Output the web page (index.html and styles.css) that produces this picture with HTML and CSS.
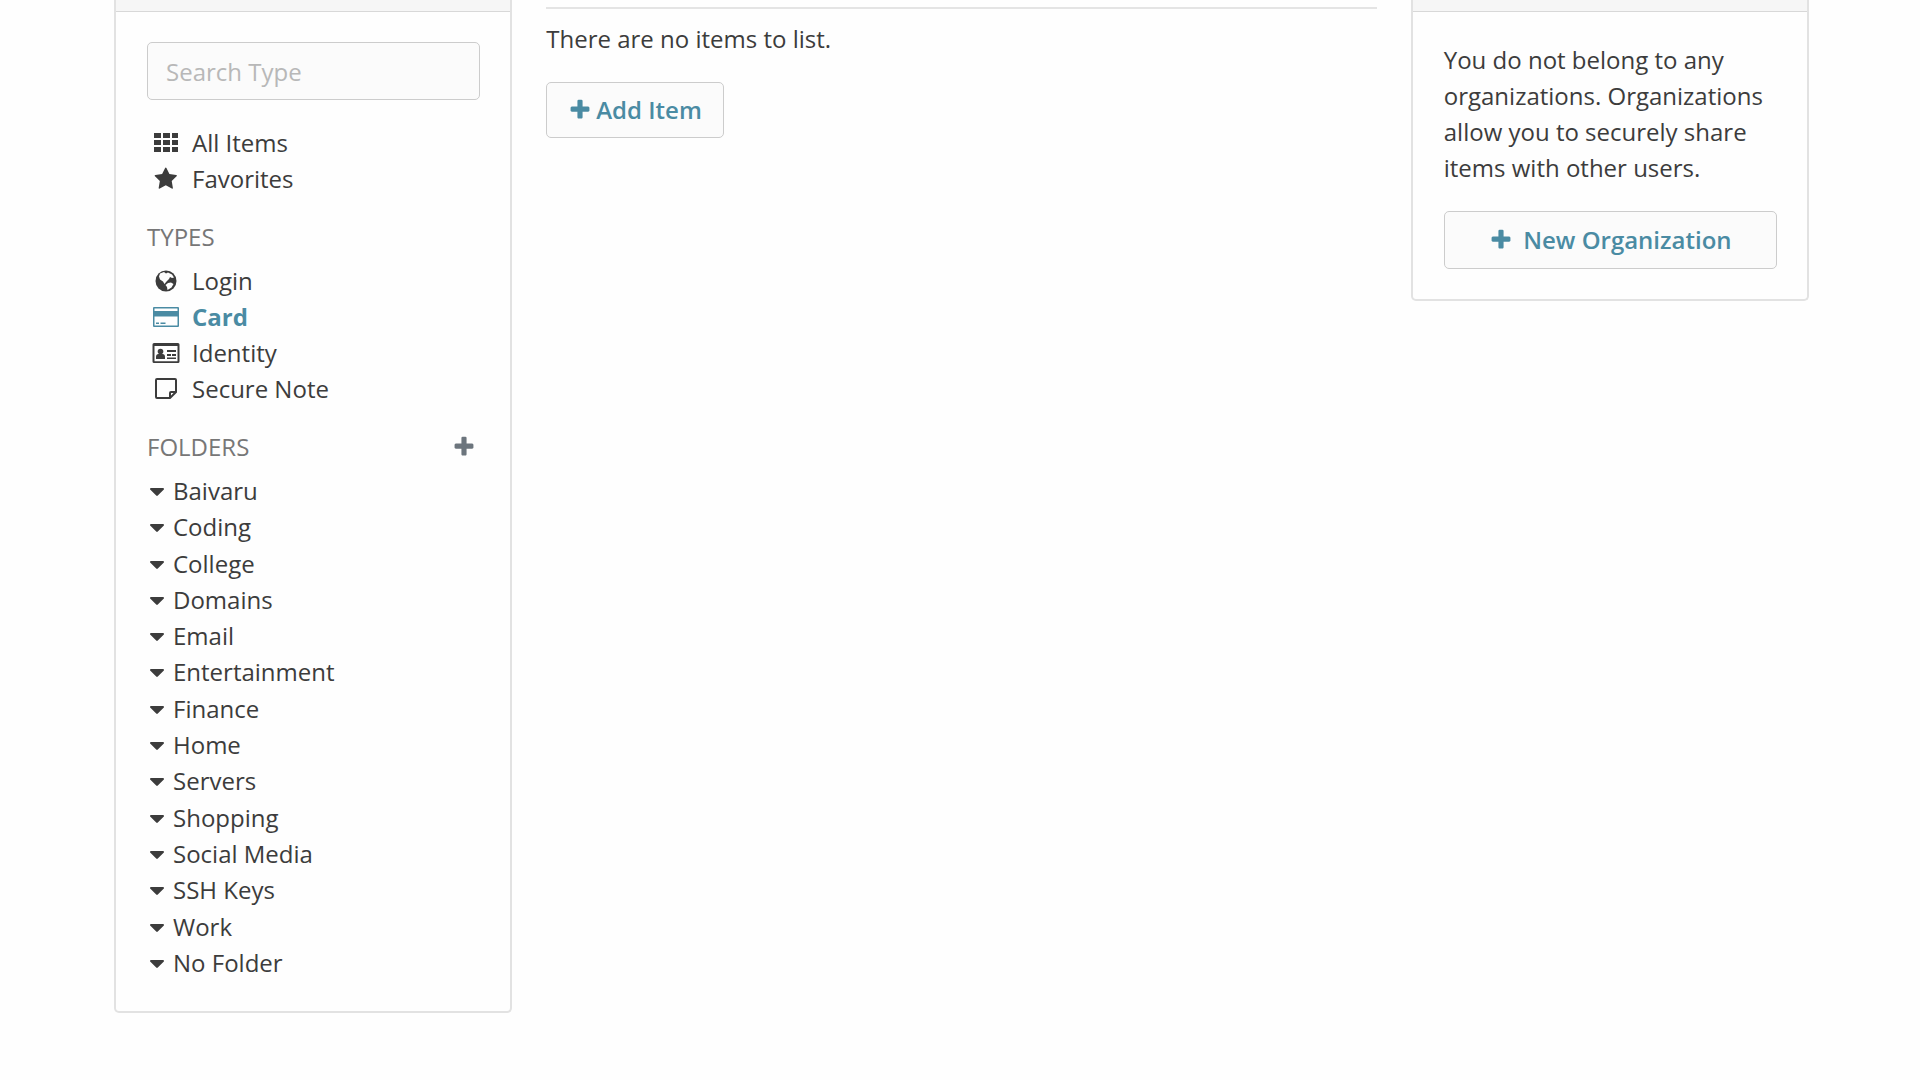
FILE: index.html
```
<!DOCTYPE html>
<html lang="en">
<head>
  <meta charset="UTF-8">
  <meta name="viewport" content="width=device-width, initial-scale=1.0">
  <title>My Vault</title>
  <link rel="stylesheet" href="styles.css">
</head>
<body>
  <!-- Shared icons -->
  <svg class="icon-defs" aria-hidden="true">
    <symbol id="icon-plus" viewBox="0 0 1792 1792">
      <path d="M1600 736v192q0 40-28 68t-68 28h-416v416q0 40-28 68t-68 28h-192q-40 0-68-28t-28-68v-416h-416q-40 0-68-28t-28-68v-192q0-40 28-68t68-28h416v-416q0-40 28-68t68-28h192q40 0 68 28t28 68v416h416q40 0 68 28t28 68z"/>
    </symbol>
    <symbol id="icon-caret" viewBox="0 0 14 8">
      <path d="M1 0h12q1 0 1 1 0 .4-.4.8L7.8 7.6q-.8.6-1.600 0L.4 1.800Q0 1.400 0 1q0-1 1-1z"/>
    </symbol>
  </svg>

  <div class="container">
    <!-- Filters -->
    <aside class="card card-filters">
      <div class="card-header"></div>
      <div class="card-body">
        <input type="search" class="search-input" placeholder="Search Type" aria-label="Search Type">

        <ul class="filter-list">
          <li>
            <a href="#">
              <svg class="icon" viewBox="0 0 28 24">
                <path d="M2 2h7v5H2zM11 2h7v5h-7zM20 2h6v5h-6zM2 9h7v5H2zM11 9h7v5h-7zM20 9h6v5h-6zM2 16h7v5H2zM11 16h7v5h-7zM20 16h6v5h-6z"/>
              </svg>
              All Items
            </a>
          </li>
          <li>
            <a href="#">
              <svg class="icon" viewBox="-197 0 2091 1792">
                <path d="M1664 647q0 22-26 48l-363 354 86 500q1 7 1 20 0 21-10.500 35.500t-30.500 14.500q-19 0-40-12l-449-236-449 236q-22 12-40 12-21 0-31.500-14.500t-10.500-35.500q0-6 2-20l86-500-364-354q-25-27-25-48 0-37 56-46l502-73 225-455q19-41 49-41t49 41l225 455 502 73q56 9 56 46z"/>
              </svg>
              Favorites
            </a>
          </li>
        </ul>

        <h2 class="section-title">TYPES</h2>
        <ul class="filter-list">
          <li>
            <a href="#">
              <svg class="icon" viewBox="0 0 28 24">
                <circle cx="14" cy="12" r="10.500"/>
                <path class="land" d="M8 4.500l4-1.500 2 1.500 2-1 4 2 2 3-2 .5-2-1-1 2-2.500 2.500-2 2.500-1.500-2.500-3-2-1-3zM16 14l3-.5 2.500 1.500-2 3.500-4 2.500-.5-3-1.500-2z"/>
              </svg>
              Login
            </a>
          </li>
          <li class="active">
            <a href="#" aria-current="page">
              <svg class="icon" viewBox="0 0 28 24">
                <path fill-rule="evenodd" d="M2 2h24q1 0 1 1v18q0 1-1 1H2q-1 0-1-1V3q0-1 1-1zM2.500 3.500V6h23V3.500zM2.500 11.500v9h23v-9zM4 17.500h3V19H4zM8.500 17.500h5V19h-5z"/>
              </svg>
              Card
            </a>
          </li>
          <li>
            <a href="#">
              <svg class="icon" viewBox="0 0 28 24">
                <path fill-rule="evenodd" d="M2 2h24q1.500 0 1.500 1.500v17q0 1.500-1.500 1.500H2Q.5 22 .5 20.500v-17Q.5 2 2 2zM2.500 5v15.200h23V5z"/>
                <circle cx="8.500" cy="10.500" r="2.800"/>
                <path d="M4 18v-2q0-3 2.500-3h4q2.500 0 2.500 3v2zM15 9h9v2h-9zM15 13h4v2h-4zM20 13h4v2h-4zM15 16.500h9V18h-9z"/>
              </svg>
              Identity
            </a>
          </li>
          <li>
            <a href="#">
              <svg class="icon" viewBox="0 0 28 24">
                <path class="outline" d="M5 2h18q1 0 1 1v12l-6 6H5q-1 0-1-1V3q0-1 1-1zM18 21v-5q0-1 1-1h5"/>
              </svg>
              Secure Note
            </a>
          </li>
        </ul>

        <div class="section-row">
          <h2 class="section-title">FOLDERS</h2>
          <button type="button" class="icon-button" aria-label="Add folder">
            <svg class="icon-small"><use href="#icon-plus"/></svg>
          </button>
        </div>
        <ul class="folder-list">
          <li><a href="#"><svg class="caret"><use href="#icon-caret"/></svg>Baivaru</a></li>
          <li><a href="#"><svg class="caret"><use href="#icon-caret"/></svg>Coding</a></li>
          <li><a href="#"><svg class="caret"><use href="#icon-caret"/></svg>College</a></li>
          <li><a href="#"><svg class="caret"><use href="#icon-caret"/></svg>Domains</a></li>
          <li><a href="#"><svg class="caret"><use href="#icon-caret"/></svg>Email</a></li>
          <li><a href="#"><svg class="caret"><use href="#icon-caret"/></svg>Entertainment</a></li>
          <li><a href="#"><svg class="caret"><use href="#icon-caret"/></svg>Finance</a></li>
          <li><a href="#"><svg class="caret"><use href="#icon-caret"/></svg>Home</a></li>
          <li><a href="#"><svg class="caret"><use href="#icon-caret"/></svg>Servers</a></li>
          <li><a href="#"><svg class="caret"><use href="#icon-caret"/></svg>Shopping</a></li>
          <li><a href="#"><svg class="caret"><use href="#icon-caret"/></svg>Social Media</a></li>
          <li><a href="#"><svg class="caret"><use href="#icon-caret"/></svg>SSH Keys</a></li>
          <li><a href="#"><svg class="caret"><use href="#icon-caret"/></svg>Work</a></li>
          <li><a href="#"><svg class="caret"><use href="#icon-caret"/></svg>No Folder</a></li>
        </ul>
      </div>
    </aside>

    <!-- Items -->
    <main class="items">
      <div class="page-header"></div>
      <p>There are no items to list.</p>
      <button type="button" class="btn">
        <svg class="icon-small"><use href="#icon-plus"/></svg>
        Add Item
      </button>
    </main>

    <!-- Organizations -->
    <aside class="card">
      <div class="card-header"></div>
      <div class="card-body">
        <p>You do not belong to any organizations. Organizations allow you to securely share items with other users.</p>
        <button type="button" class="btn btn-block">
          <svg class="icon-small"><use href="#icon-plus"/></svg>
          New Organization
        </button>
      </div>
    </aside>
  </div>
</body>
</html>
```
FILE: styles.css
```
/* Reset and base styles */
* {
  margin: 0;
  padding: 0;
  box-sizing: border-box;
}

body {
  font-family: 'Open Sans', 'Helvetica Neue', sans-serif;
  font-size: 24px;
  line-height: 36px;
  color: #3c3c3c;
  background-color: #fefefe;
}

a {
  color: inherit;
  text-decoration: none;
}

ul {
  list-style: none;
}

svg {
  fill: currentColor;
  flex-shrink: 0;
}

.icon-defs {
  display: none;
}

/* Layout */
.container {
  display: grid;
  grid-template-columns: repeat(12, 1fr);
  gap: 34px;
  align-items: start;
  padding: 0 111px 40px 114px;
}

/* Cards */
.card {
  grid-column: span 3;
  border: 2px solid #e2e2e2;
  border-top: 0;
  border-radius: 0 0 5px 5px;
}

.card-header {
  height: 12px;
  background-color: #f6f6f6;
  border-bottom: 1px solid #d8d8d8;
}

.card-body {
  padding: 30px 30px 30px 31px;
}

/* Search */
.search-input {
  display: block;
  width: 100%;
  height: 58px;
  margin-bottom: 25px;
  padding: 0 18px;
  font: inherit;
  color: #3c3c3c;
  background-color: #fbfbfb;
  border: 1px solid #ccc;
  border-radius: 5px;
}

.search-input::placeholder {
  color: #b8b8b8;
}

/* Filter lists */
.filter-list {
  margin-bottom: 22px;
}

.filter-list a {
  display: flex;
  align-items: center;
  gap: 12px;
  padding-left: 5px;
}

.filter-list .active {
  color: #4a8ba3;
  font-weight: 700;
}

.icon {
  width: 28px;
  height: 24px;
}

.land {
  fill: #fefefe;
}

.outline {
  fill: none;
  stroke: currentColor;
  stroke-width: 2;
}

.section-title {
  margin-bottom: 8px;
  font-size: 24px;
  font-weight: 400;
  line-height: 36px;
  color: #777;
}

.section-row {
  display: flex;
  justify-content: space-between;
}

.icon-button {
  width: 32px;
  height: 36px;
  color: #6c757d;
  background: none;
  border: 0;
}

.icon-small {
  width: 24px;
  height: 24px;
  vertical-align: middle;
}

/* Folders */
.folder-list {
  display: flex;
  flex-direction: column;
  justify-content: space-between;
  min-height: 508px;
}

.folder-list a {
  display: flex;
  align-items: center;
  gap: 9px;
  padding-left: 3px;
}

.caret {
  width: 14px;
  height: 8px;
  margin-top: 2px;
}

/* Items */
.items {
  grid-column: span 6;
}

.page-header {
  height: 9px;
  margin-bottom: 12px;
  border-bottom: 2px solid #e4e4e4;
}

p {
  margin-bottom: 25px;
}

/* Buttons */
.btn {
  display: flex;
  align-items: center;
  justify-content: center;
  gap: 4px;
  height: 56px;
  padding: 0 21px;
  font: inherit;
  font-weight: 600;
  color: #4a8ba3;
  background-color: #fbfbfb;
  border: 1px solid #ccc;
  border-radius: 5px;
}

.btn-block {
  width: 100%;
  height: 58px;
  gap: 10px;
}
```
